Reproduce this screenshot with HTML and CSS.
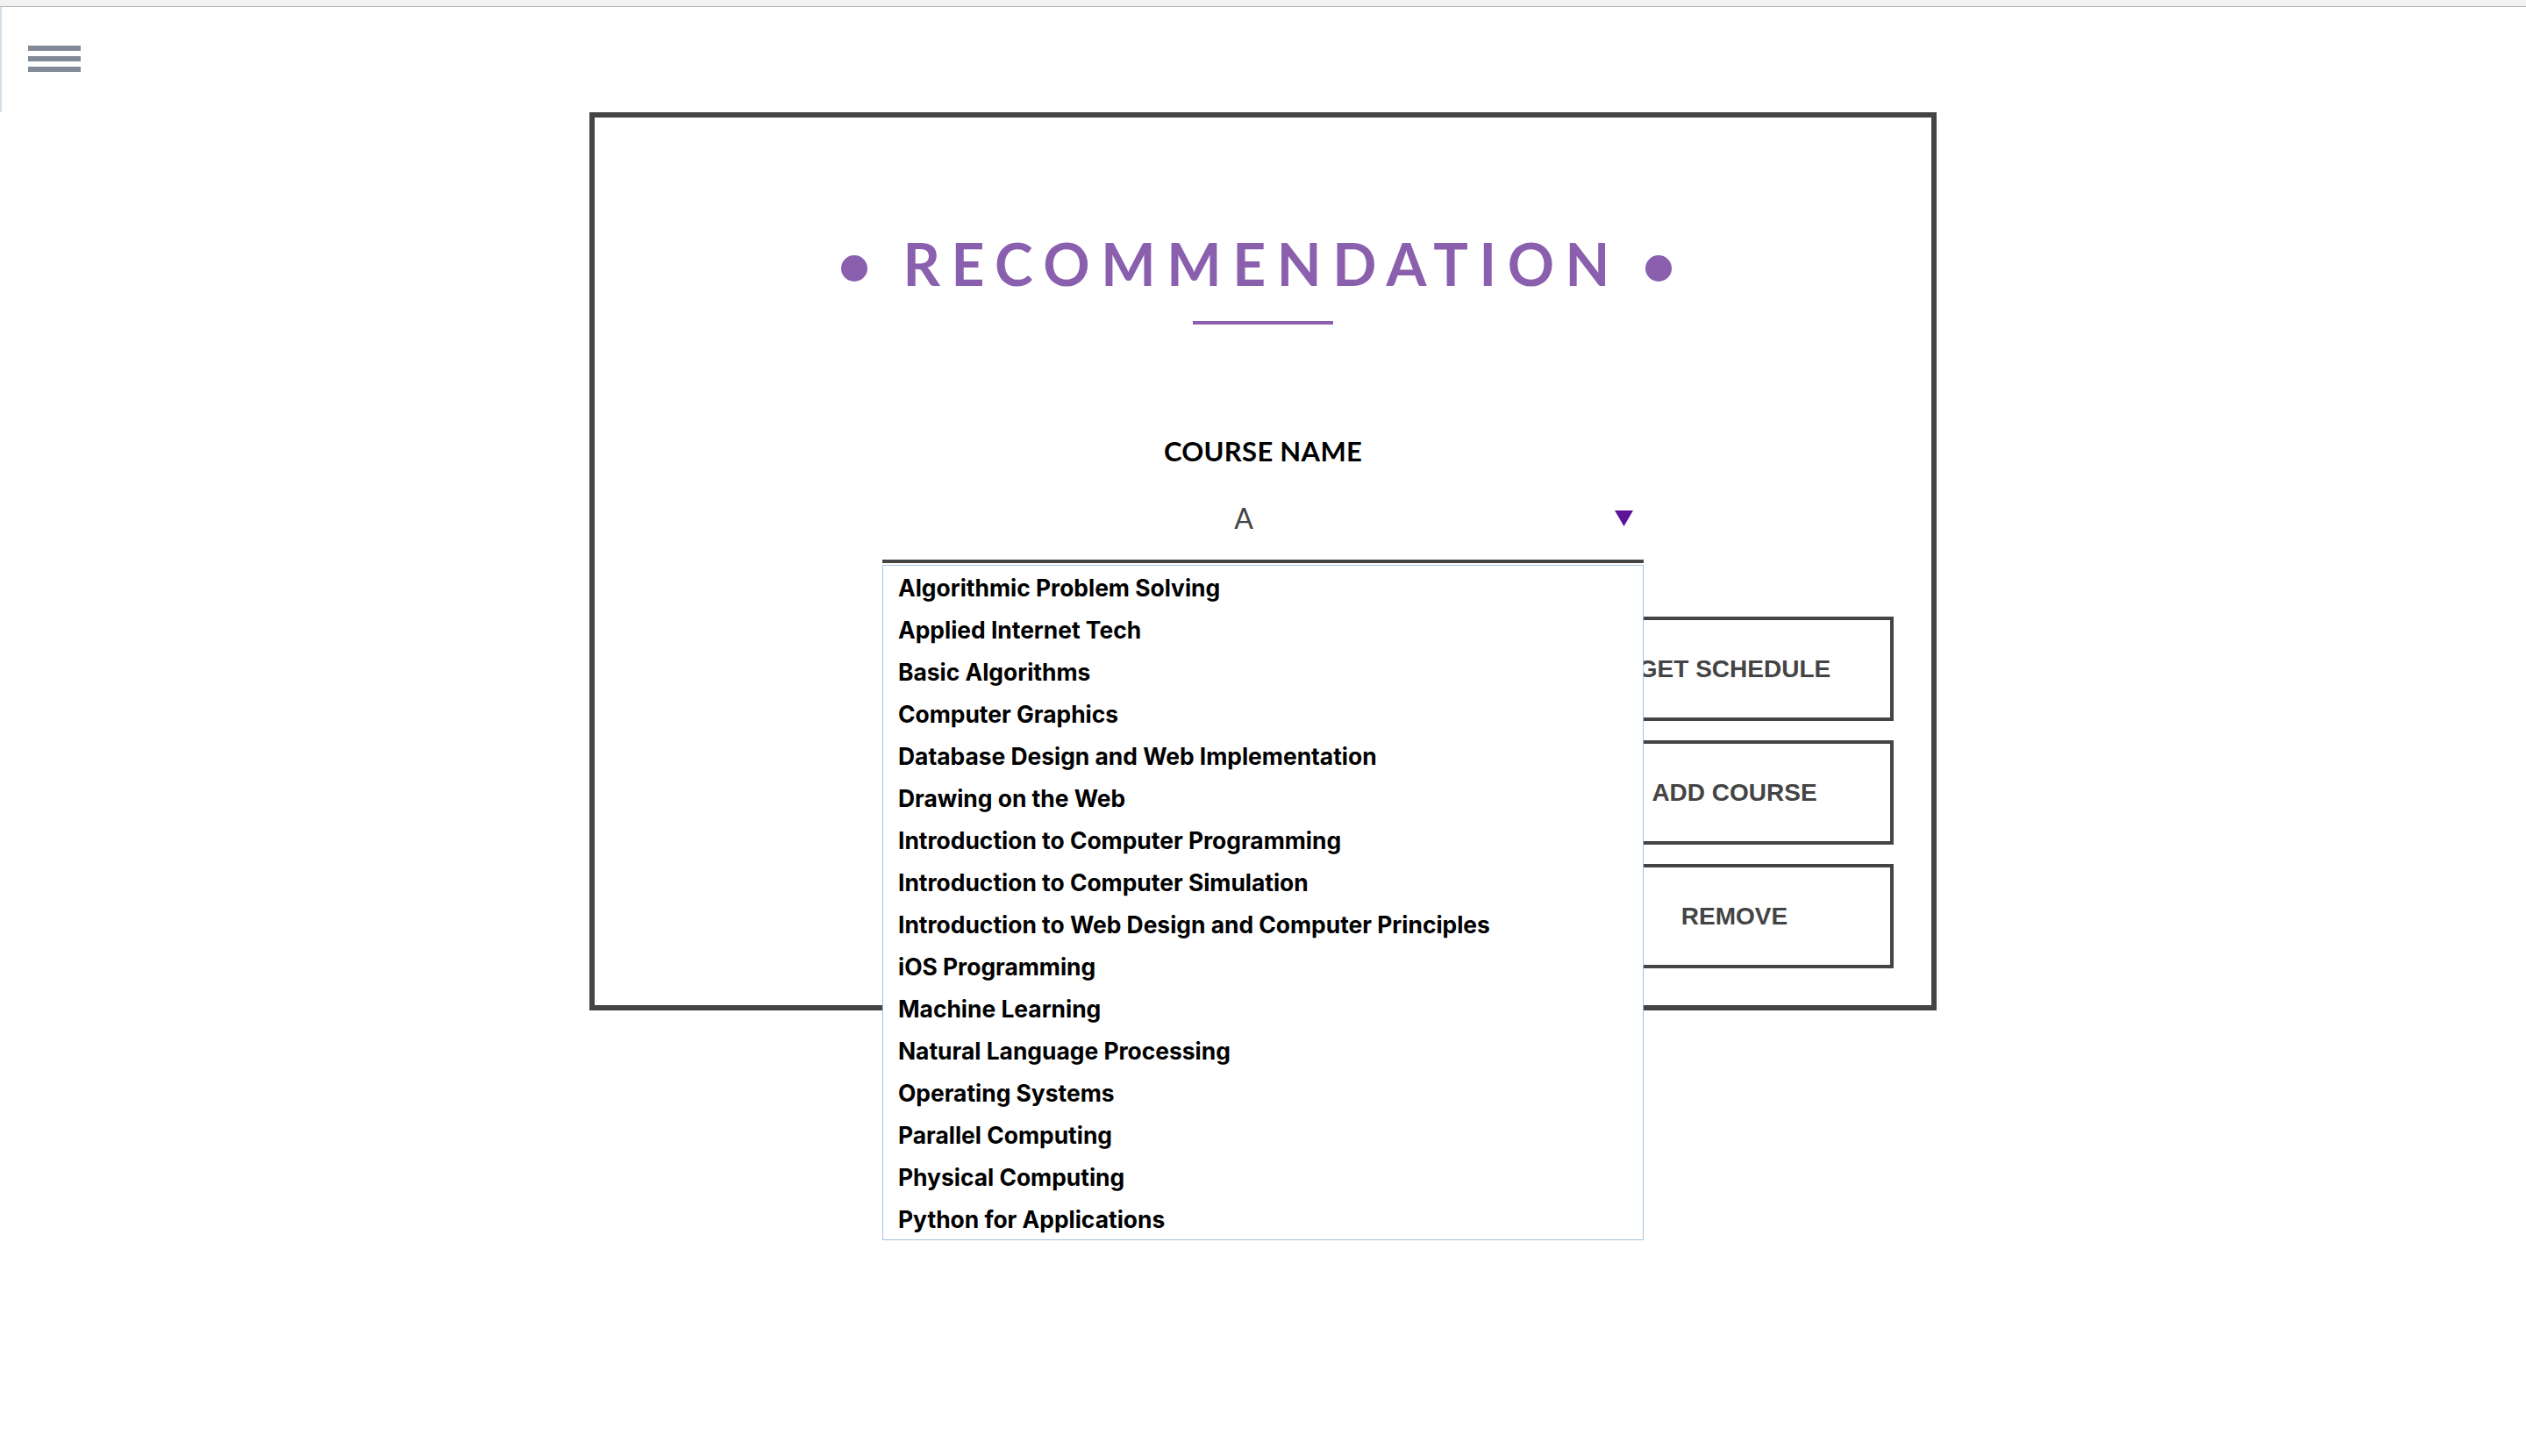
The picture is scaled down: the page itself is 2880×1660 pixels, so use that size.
FILE: index.html
```html
<!DOCTYPE html>
<html lang="en">
<head>
<meta charset="utf-8">
<title>Recommendation</title>
<link rel="stylesheet" href="styles.css">
</head>
<body>
<div class="topbar"></div>
<header class="nav">
  <div class="burger"><span></span><span></span><span></span></div>
</header>
<main class="panel">
  <div class="title-row">
    <span class="dot"></span>
    <h1 class="title">RECOMMENDATION</h1>
    <span class="dot"></span>
  </div>
  <div class="title-rule"></div>
  <div class="label">COURSE NAME</div>
  <div class="select">
    <span class="select-value">A</span>
    <svg class="caret" width="21" height="18" viewBox="0 0 21 18"><polygon points="0,0 21,0 10.5,18" fill="#5a1399"/></svg>
    <ul class="options">
      <li>Algorithmic Problem Solving</li>
      <li>Applied Internet Tech</li>
      <li>Basic Algorithms</li>
      <li>Computer Graphics</li>
      <li>Database Design and Web Implementation</li>
      <li>Drawing on the Web</li>
      <li>Introduction to Computer Programming</li>
      <li>Introduction to Computer Simulation</li>
      <li>Introduction to Web Design and Computer Principles</li>
      <li>iOS Programming</li>
      <li>Machine Learning</li>
      <li>Natural Language Processing</li>
      <li>Operating Systems</li>
      <li>Parallel Computing</li>
      <li>Physical Computing</li>
      <li>Python for Applications</li>
    </ul>
  </div>
  <div class="actions">
    <button class="btn">GET SCHEDULE</button>
    <button class="btn">ADD COURSE</button>
    <button class="btn">REMOVE</button>
  </div>
</main>
</body>
</html>
```

FILE: styles.css
```css
* { box-sizing: border-box; }
html, body { margin: 0; padding: 0; background: #ffffff; }
body { width: 2880px; height: 1660px; overflow: hidden; font-family: "Lato", "Liberation Sans", sans-serif; }

.topbar { height: 8px; background: #f2f2f2; border-bottom: 1px solid #b3b3b3; }

.nav { width: 120px; height: 120px; border-left: 2px solid #d4dfe9; padding: 44px 0 0 30px; }
.burger { display: flex; flex-direction: column; gap: 6px; width: 60px; }
.burger span { display: block; height: 6px; background: #818b97; }

.panel {
  margin: 0 auto;
  width: 1536px;
  height: 1024px;
  border: 6px solid #444444;
  display: flex;
  flex-direction: column;
}

.title-row {
  margin-top: 134px;
  display: flex;
  justify-content: center;
  align-items: center;
  gap: 41px;
  padding-right: 15px;
  height: 66px;
}
.dot { width: 30px; height: 30px; border-radius: 50%; background: #8a5fae; flex: none; margin-top: 10px; }
.title {
  margin: 0;
  font-family: "Lato", sans-serif;
  font-weight: 700;
  font-size: 66px;
  line-height: 66px;
  letter-spacing: 12.6px;
  margin-right: -12.6px;
  color: #8a5fae;
}
.title-rule { width: 160px; height: 4px; background: #8a5fae; margin: 32px auto 0; }

.label {
  margin-top: 129px;
  text-align: center;
  font-family: "Lato", sans-serif;
  font-weight: 700;
  font-size: 31px;
  line-height: 30px;
  letter-spacing: 0.3px;
  color: #000000;
}

.select {
  position: relative;
  margin: 31px auto 0;
  width: 868px;
  padding: 14.5px 44px 31.5px 0;
  border-bottom: 4px solid #444444;
  text-align: center;
  font-family: "Lato", sans-serif;
  font-size: 32px;
  line-height: 32px;
  color: #444444;
}
.select-value { display: block; }
.caret { position: absolute; right: 12px; top: 22px; }

.options {
  position: absolute;
  left: 0;
  top: calc(100% + 6px);
  width: 868px;
  margin: 0;
  padding: 0;
  list-style: none;
  background: #ffffff;
  border: 1px solid #a3c2e3;
  text-align: left;
  z-index: 2;
}
.options li {
  height: 48px;
  padding: 3px 0 0 17px;
  font-family: "Inter", "Noto Sans", sans-serif;
  font-weight: 700;
  font-size: 26.4px;
  line-height: 45px;
  color: #000000;
  white-space: nowrap;
}

.actions {
  margin: 61px 43px 0 auto;
  width: 363px;
  display: flex;
  flex-direction: column;
  gap: 22px;
}
.btn {
  height: 119px;
  width: 363px;
  background: #ffffff;
  border: 4px solid #444444;
  font-family: "Liberation Sans", Arial, sans-serif;
  font-weight: 700;
  font-size: 28px;
  color: #444444;
  padding: 0;
  text-align: center;
}
```
